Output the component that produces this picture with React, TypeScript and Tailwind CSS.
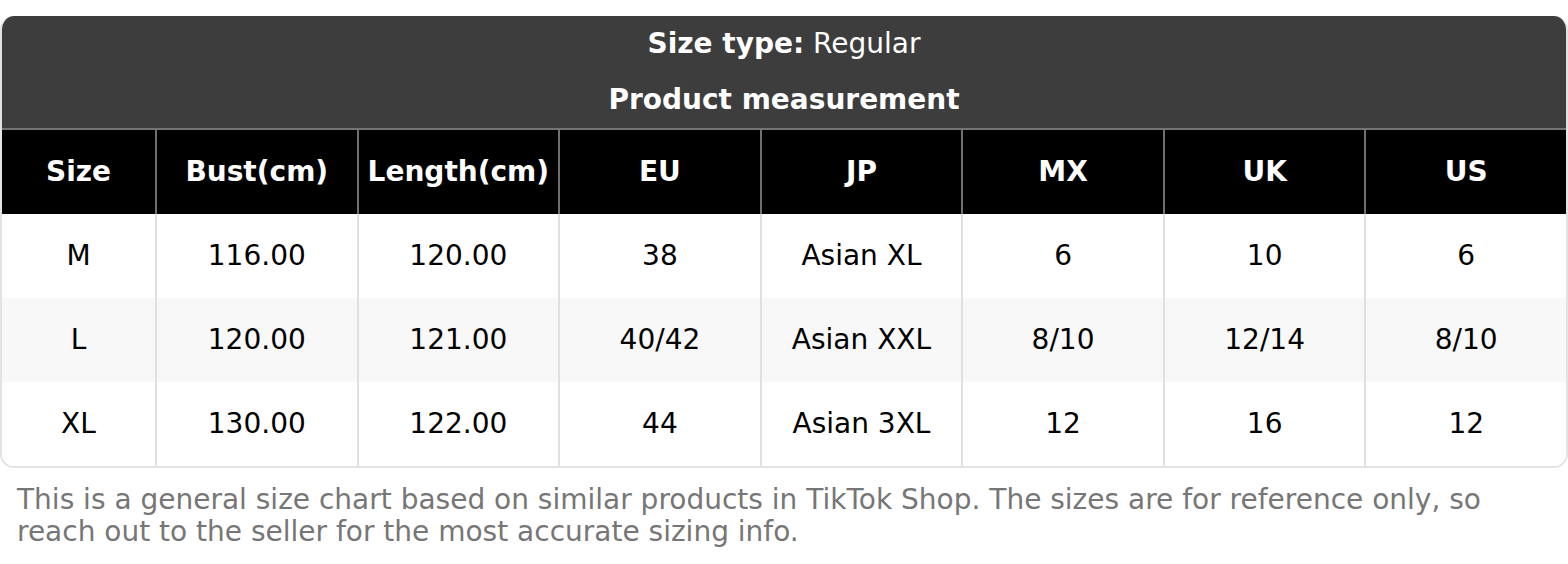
import React from "react";

const headers = ["Size", "Bust(cm)", "Length(cm)", "EU", "JP", "MX", "UK", "US"];
const rows = [
  ["M", "116.00", "120.00", "38", "Asian XL", "6", "10", "6"],
  ["L", "120.00", "121.00", "40/42", "Asian XXL", "8/10", "12/14", "8/10"],
  ["XL", "130.00", "122.00", "44", "Asian 3XL", "12", "16", "12"],
];

export default function App() {
  return (
    <div
      className="w-[1568px] h-[564px] bg-white pt-[16px]"
      style={{ fontFamily: '"DejaVu Sans", Verdana, sans-serif' }}
    >
      <div className="rounded-[14px] overflow-hidden border-2 border-t-0 border-[#e3e3e3]">
        <div className="bg-[#3d3d3d] text-white text-[28px] border-b-2 border-[#747474]">
          <div className="h-[56px] flex items-center justify-center">
            <span className="font-bold">Size type:</span>
            <span>&nbsp;Regular</span>
          </div>
          <div className="h-[56px] flex items-center justify-center font-bold">
            Product measurement
          </div>
        </div>
        <div className="grid grid-cols-[153px_repeat(7,1fr)] bg-black text-white font-bold text-[28px]">
          {headers.map((h, i) => (
            <div
              key={h}
              className={`h-[84px] flex items-center justify-center ${i > 0 ? "border-l-2 border-[#6f6f6f]" : ""}`}
            >
              {h}
            </div>
          ))}
        </div>
        {rows.map((r, ri) => (
          <div
            key={ri}
            className={`grid grid-cols-[153px_repeat(7,1fr)] text-black text-[28px] ${ri === 1 ? "bg-[#f8f8f8]" : "bg-white"}`}
          >
            {r.map((c, i) => (
              <div
                key={i}
                className={`h-[84px] flex items-center justify-center ${i > 0 ? "border-l-2 border-[#e0e0e0]" : ""}`}
              >
                {c}
              </div>
            ))}
          </div>
        ))}
      </div>
      <p className="px-[17px] pt-[16px] text-[28px] leading-[32px] text-[#767676]">
        This is a general size chart based on similar products in TikTok Shop. The sizes are for reference only, so reach out to the seller for the most accurate sizing info.
      </p>
    </div>
  );
}
